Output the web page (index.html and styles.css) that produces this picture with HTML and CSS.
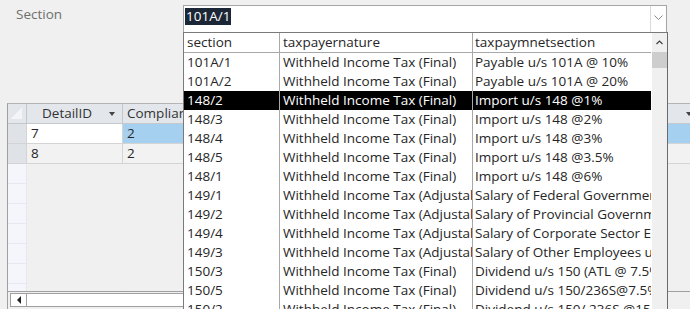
FILE: index.html
```html
<!DOCTYPE html>
<html lang="en">
<head>
    <meta charset="UTF-8">
    <title>Section Lookup</title>
    <link rel="stylesheet" href="styles.css">
</head>
<body>
    <div class="form">
        <!-- Section field with combo box -->
        <div class="field-row">
            <label class="field-label" for="section">Section</label>
            <div class="combo">
                <div class="combo-input"><span class="selected-text">101A/1</span></div>
                <div class="combo-button">
                    <svg width="9" height="6" viewBox="0 0 9 6"><polyline points="0.5,0.5 4.5,4.5 8.5,0.5" fill="none" stroke="#8a8a8a" stroke-width="1"/></svg>
                </div>
            </div>
        </div>

        <!-- Datasheet behind the drop-down -->
        <div class="sheet">
            <div class="sheet-grid">
                <div class="sheet-row sheet-head">
                    <div class="cell selector corner"></div>
                    <div class="cell head-cell"><span>DetailID</span><i class="sort-arrow"></i></div>
                    <div class="cell head-cell head-wide"><span>Complian</span><i class="sort-arrow"></i></div>
                </div>
                <div class="sheet-row current">
                    <div class="cell selector"></div>
                    <div class="cell">7</div>
                    <div class="cell active">2</div>
                </div>
                <div class="sheet-row alt">
                    <div class="cell selector"></div>
                    <div class="cell">8</div>
                    <div class="cell">2</div>
                </div>
                <div class="sheet-row empty"><div class="cell selector"></div><div class="cell"></div><div class="cell"></div></div>
                <div class="sheet-row empty"><div class="cell selector"></div><div class="cell"></div><div class="cell"></div></div>
                <div class="sheet-row empty"><div class="cell selector"></div><div class="cell"></div><div class="cell"></div></div>
                <div class="sheet-row empty"><div class="cell selector"></div><div class="cell"></div><div class="cell"></div></div>
                <div class="sheet-row empty"><div class="cell selector"></div><div class="cell"></div><div class="cell"></div></div>
                <div class="sheet-row empty"><div class="cell selector"></div><div class="cell"></div><div class="cell"></div></div>
                <div class="sheet-row empty"><div class="cell selector"></div><div class="cell"></div><div class="cell"></div></div>
            </div>
            <div class="hscroll">
                <div class="hscroll-box">
                    <div class="hscroll-btn"><i class="left-arrow"></i></div>
                </div>
            </div>
        </div>

        <!-- Open drop-down list of the combo box -->
        <div class="combo-list">
            <div class="list-table">
                <div class="list-row list-head">
                    <div class="lc c1">section</div>
                    <div class="lc c2">taxpayernature</div>
                    <div class="lc c3">taxpaymnetsection</div>
                </div>
                <div class="list-row"><div class="lc c1">101A/1</div><div class="lc c2">Withheld Income Tax (Final)</div><div class="lc c3">Payable u/s 101A @ 10%</div></div>
                <div class="list-row"><div class="lc c1">101A/2</div><div class="lc c2">Withheld Income Tax (Final)</div><div class="lc c3">Payable u/s 101A @ 20%</div></div>
                <div class="list-row picked"><div class="lc c1">148/2</div><div class="lc c2">Withheld Income Tax (Final)</div><div class="lc c3">Import u/s 148 @1%</div></div>
                <div class="list-row"><div class="lc c1">148/3</div><div class="lc c2">Withheld Income Tax (Final)</div><div class="lc c3">Import u/s 148 @2%</div></div>
                <div class="list-row"><div class="lc c1">148/4</div><div class="lc c2">Withheld Income Tax (Final)</div><div class="lc c3">Import u/s 148 @3%</div></div>
                <div class="list-row"><div class="lc c1">148/5</div><div class="lc c2">Withheld Income Tax (Final)</div><div class="lc c3">Import u/s 148 @3.5%</div></div>
                <div class="list-row"><div class="lc c1">148/1</div><div class="lc c2">Withheld Income Tax (Final)</div><div class="lc c3">Import u/s 148 @6%</div></div>
                <div class="list-row"><div class="lc c1">149/1</div><div class="lc c2">Withheld Income Tax (Adjustable)</div><div class="lc c3">Salary of Federal Government Employees</div></div>
                <div class="list-row"><div class="lc c1">149/2</div><div class="lc c2">Withheld Income Tax (Adjustable)</div><div class="lc c3">Salary of Provincial Government Employees</div></div>
                <div class="list-row"><div class="lc c1">149/4</div><div class="lc c2">Withheld Income Tax (Adjustable)</div><div class="lc c3">Salary of Corporate Sector Employees</div></div>
                <div class="list-row"><div class="lc c1">149/3</div><div class="lc c2">Withheld Income Tax (Adjustable)</div><div class="lc c3">Salary of Other Employees u/s 149</div></div>
                <div class="list-row"><div class="lc c1">150/3</div><div class="lc c2">Withheld Income Tax (Final)</div><div class="lc c3">Dividend u/s 150 (ATL @ 7.5%)</div></div>
                <div class="list-row"><div class="lc c1">150/5</div><div class="lc c2">Withheld Income Tax (Final)</div><div class="lc c3">Dividend u/s 150/236S@7.5%</div></div>
                <div class="list-row"><div class="lc c1">150/2</div><div class="lc c2">Withheld Income Tax (Final)</div><div class="lc c3">Dividend u/s 150/ 236S @15%</div></div>
            </div>
            <div class="list-scroll">
                <div class="scroll-up">
                    <svg width="7" height="5" viewBox="0 0 7 5"><polyline points="0.5,4 3.5,1 6.5,4" fill="none" stroke="#404040" stroke-width="1.2"/></svg>
                </div>
                <div class="scroll-thumb"></div>
            </div>
        </div>
    </div>
</body>
</html>
```

FILE: styles.css
```css
body {
    margin: 0;
    padding: 0;
    background-color: #f0f0f0;
    font-family: "Open Sans", "Noto Sans", sans-serif;
    font-size: 13.5px;
    color: #262626;
    overflow: hidden;
}

.form {
    position: relative; /* anchor for the open drop-down */
    width: 690px;
    height: 309px;
    overflow: hidden;
}

/* Section label and combo box */
.field-row {
    display: flex;
    height: 32px;
    padding-top: 5px;
    box-sizing: border-box;
}

.field-label {
    width: 183px;
    padding-left: 16px;
    box-sizing: border-box;
    color: #6e6e6e;
    line-height: 18px;
    margin-top: 0;
}

.combo {
    display: flex;
    width: 484px;
    height: 27px;
    background-color: white;
    border: 1px solid #a5a5a5;
    border-bottom: none;
    box-sizing: border-box;
}

.combo-input {
    flex: 1;
    padding: 1px 0 0 1px;
}

.selected-text {
    display: inline-block;
    background-color: #1b2636;
    color: white;
    height: 17px;
    line-height: 17px;
    padding: 0 1px 0 1px;
}

.combo-button {
    width: 15px;
    display: flex;
    align-items: center;
    justify-content: center;
    border-left: 1px solid #dadada;
    padding-bottom: 2px;
}

/* Datasheet */
.sheet {
    margin-top: 71px;
    margin-left: 7px;
    height: 206px;
    display: flex;
    flex-direction: column;
    border-left: 1px solid #a0a0a0;
    border-top: 1px solid #b4b4b4;
    box-sizing: border-box;
}

.sheet-grid {
    flex: 1;
    overflow: hidden;
}

.sheet-row {
    display: grid;
    grid-template-columns: 19px 96px 580px;
    height: 20px;
}

.cell {
    border-right: 1px solid #d4d4d4;
    border-bottom: 1px solid #d4d4d4;
    padding-left: 4px;
    line-height: 19px;
    box-sizing: border-box;
    white-space: nowrap;
    overflow: hidden;
}

.selector {
    background-color: #dfe3e8;
    padding: 0;
}

.sheet-head .cell {
    background-color: #e3e7ec;
    border-color: #c4c8cd;
    color: #333;
}

.corner {
    background: linear-gradient(135deg, #e3e7ec 50%, #f2f4f7 50%) no-repeat 3px 4px / 11px 11px, #e3e7ec;
}

.head-cell {
    display: flex;
    align-items: center;
}

.head-cell span {
    flex: 1;
    padding-left: 11px;
}

.head-wide span {
    flex: none;
    width: 559px;
    padding-left: 0;
}

.sort-arrow {
    width: 0;
    height: 0;
    border-left: 3px solid transparent;
    border-right: 3px solid transparent;
    border-top: 4px solid #444;
    margin-right: 7px;
}

.current .cell {
    background-color: white;
}

.current .selector {
    background-color: #dfe3e8;
}

.current .active {
    background-color: #a6d0f0;
}

.alt .cell {
    background-color: #f2f2f2;
}

.alt .selector {
    background-color: #dfe3e8;
}

.empty .cell {
    border-color: #efefef;
}

.empty .selector {
    background-color: #f4f6fb;
    border-color: #e6e9f0;
}

/* Horizontal scroll bar */
.hscroll {
    height: 16px;
    border-top: 1px solid #a0a0a0;
    background-color: #f0f0f0;
    padding: 1px 0 0 2px;
}

.hscroll-box {
    height: 14px;
    width: 300px;
    background-color: white;
    border: 1px solid #a0a0a0;
    box-sizing: border-box;
}

.hscroll-btn {
    width: 15px;
    height: 100%;
    border-right: 1px solid #a0a0a0;
    display: flex;
    align-items: center;
    justify-content: center;
}

.left-arrow {
    width: 0;
    height: 0;
    border-top: 4px solid transparent;
    border-bottom: 4px solid transparent;
    border-right: 4px solid #222;
}

/* Open drop-down list */
.combo-list {
    position: absolute;
    left: 183px;
    top: 32px;
    width: 485px;
    height: 290px;
    display: flex;
    background-color: white;
    border: 1px solid #7a7a7a;
    border-right-color: #6a6a6a;
    box-sizing: border-box;
}

.list-table {
    width: 468px;
    overflow: hidden;
}

.list-row {
    display: grid;
    grid-template-columns: 96px 193px 179px;
    height: 19px;
    line-height: 19px;
}

.lc {
    white-space: nowrap;
    overflow: hidden;
    padding-left: 3px;
    border-right: 1px solid #a8a8a8;
}

.lc.c3 {
    border-right: none;
    padding-left: 2px;
}

.list-head {
    border-bottom: 1px solid #a8a8a8;
}

.list-head .lc {
    line-height: 18px;
}

.picked {
    background-color: black;
    color: white;
}

.list-scroll {
    width: 15px;
    background-color: #f0f0f0;
    margin-left: 1px;
}

.scroll-up {
    height: 18px;
    display: flex;
    align-items: center;
    justify-content: center;
}

.scroll-thumb {
    height: 16px;
    background-color: #cdcdcd;
    margin: 1px 0 0 0;
}
```
